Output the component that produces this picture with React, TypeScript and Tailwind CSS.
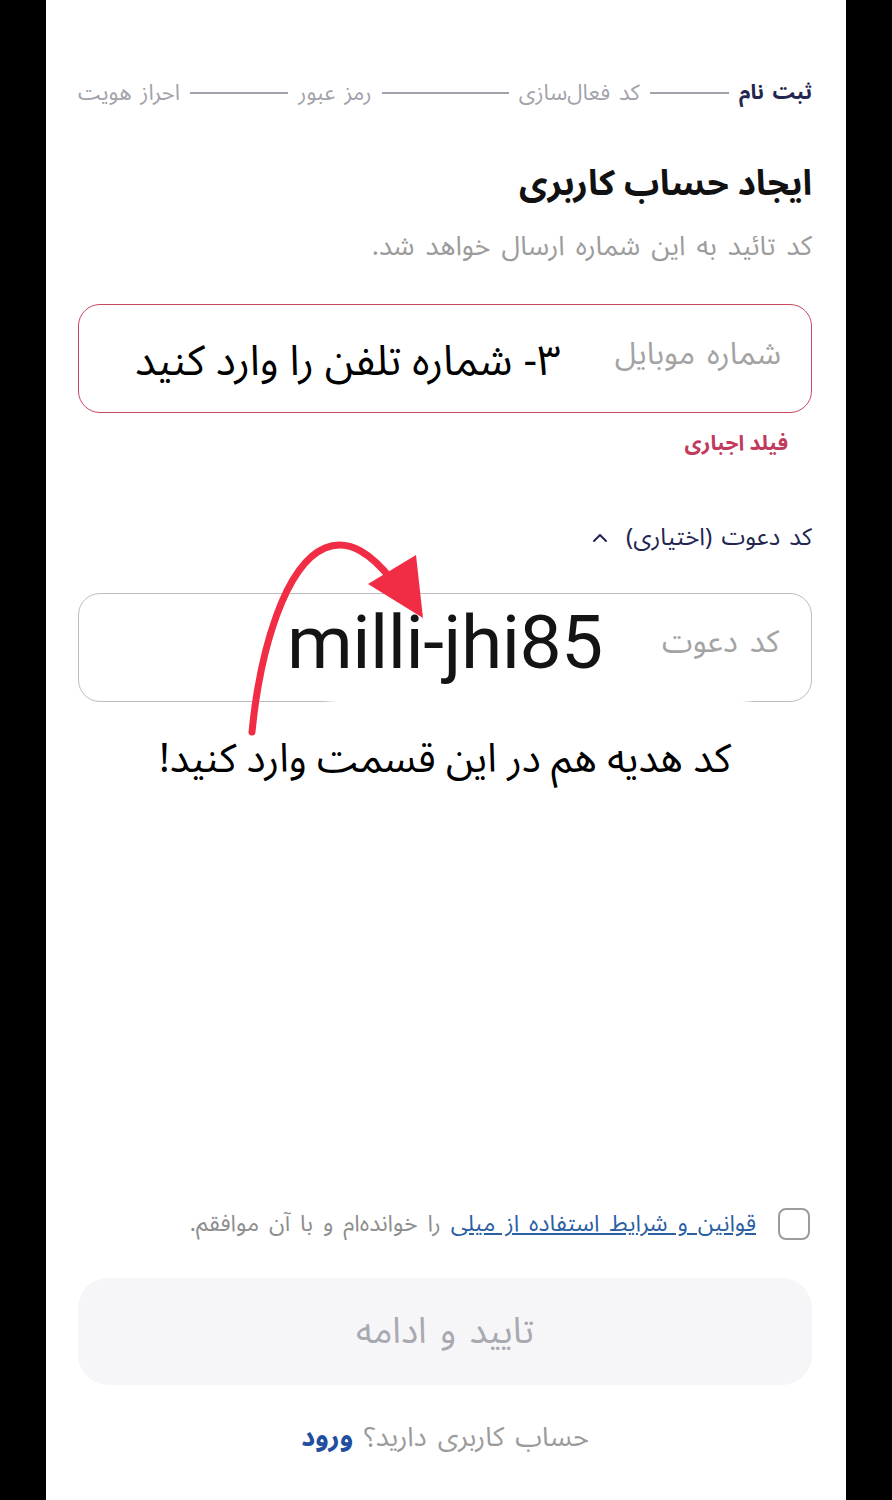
import { ChevronUp } from "lucide-react";

const fa = "font-['Noto_Sans_Arabic','DejaVu_Sans',sans-serif]";

function Stepper() {
  const steps = ["ثبت نام", "کد فعال‌سازی", "رمز عبور", "احراز هویت"];
  return (
    <div className="flex items-center h-[30px] text-[22px] [word-spacing:3px]">
      {steps.map((s, i) => (
        <div key={s} className={i === 0 ? "flex items-center" : "flex items-center flex-1"}>
          {i > 0 && <div className="flex-1 h-[2.5px] bg-[#a3a3ae] mx-[10px]" />}
          <span className={i === 0 ? "text-[#23264f] font-bold text-[21px] whitespace-nowrap" : "text-[#a2a2ab] whitespace-nowrap"}>
            {s}
          </span>
        </div>
      ))}
    </div>
  );
}

export default function App() {
  return (
    <div className="w-[892px] min-h-[1500px] bg-black flex justify-center">
      <div dir="rtl" className={`relative w-[800px] min-h-[1500px] bg-white pl-[32px] pr-[34px] pt-[78px] ${fa}`}>
        <Stepper />

        {/* Title */}
        <h1 className="mt-[54px] text-[35px] font-bold text-[#111] leading-[44px]">ایجاد حساب کاربری</h1>
        <p className="mt-[25px] text-[27px] text-[#9c9c9c] leading-[32px] [word-spacing:4px]">کد تائید به این شماره ارسال خواهد شد.</p>

        {/* Mobile input */}
        <div className="relative mt-[41px] h-[109px] rounded-[22px] border-[1.5px] border-[#c9475f] flex items-center pr-[30px]">
          <span className="text-[31px] text-[#a3a3a3] [word-spacing:4px] -mt-[8px]">شماره موبایل</span>
          <span className="absolute right-[250px] top-[31px] text-[42px] text-black whitespace-nowrap leading-[52px]">
            ۳- شماره تلفن را وارد کنید
          </span>
        </div>
        <p className="mt-[16px] pr-[24px] text-[21px] font-bold text-[#c23a5c] leading-[28px]">فیلد اجباری</p>

        {/* Invite code */}
        <div className="mt-[66px] flex items-center gap-[14px] text-[24px] text-[#23264f] leading-[30px] [word-spacing:3px]">
          <span>کد دعوت (اختیاری)</span>
          <ChevronUp size={24} strokeWidth={2} />
        </div>

        <div className="relative mt-[40px] h-[109px] rounded-[22px] border-[1.5px] border-[#bdbdbd] flex items-center pr-[32px]">
          <span className="text-[31px] text-[#a3a3a3] [word-spacing:4px] -mt-[10px]">کد دعوت</span>
          <div className="absolute left-[250px] bottom-[-14px] w-[420px] h-[28px] rounded-full bg-white blur-[4px]" />
          <span
            dir="ltr"
            className="absolute left-[208px] top-[0px] font-['Roboto',sans-serif] text-[75px] text-[#141414] leading-[96px] tracking-[-0.5px]"
          >
            milli-jhi85
          </span>
        </div>

        <p className="mt-[32px] text-center text-[40px] text-black leading-[52px]">کد هدیه هم در این قسمت وارد کنید!</p>

        {/* Red arrow */}
        <svg className="absolute left-0 top-0 pointer-events-none" width="800" height="800" viewBox="46 0 800 800">
          <path
            d="M252 732 C 260 650, 285 565, 325 548 C 350 538, 372 555, 392 580"
            fill="none"
            stroke="#f02d44"
            strokeWidth="7"
            strokeLinecap="round"
          />
          <polygon points="368,584 416,555 423,618" fill="#f02d44" />
        </svg>

        {/* Terms */}
        <div className="mt-[422px] flex items-center gap-[22px] pr-[2px]">
          <div className="w-[32px] h-[32px] rounded-[8px] border-2 border-[#9c9c9c] shrink-0" />
          <p className="text-[23px] text-[#8e8e8e] leading-[32px] [word-spacing:4px]">
            <a className="text-[#2b5fa3] underline underline-offset-2">قوانین و شرایط استفاده از میلی</a> را خوانده‌ام و با آن موافقم.
          </p>
        </div>

        <button className="mt-[38px] w-full h-[107px] rounded-[30px] bg-[#f6f6f8] text-[36px] text-[#a9a9b1] [word-spacing:4px]">
          تایید و ادامه
        </button>

        <p className="mt-[37px] text-center text-[27px] text-[#9b9b9b] leading-[32px] [word-spacing:4px]">
          حساب کاربری دارید؟ <span className="font-bold text-[#1f4f9e]">ورود</span>
        </p>
      </div>
    </div>
  );
}
